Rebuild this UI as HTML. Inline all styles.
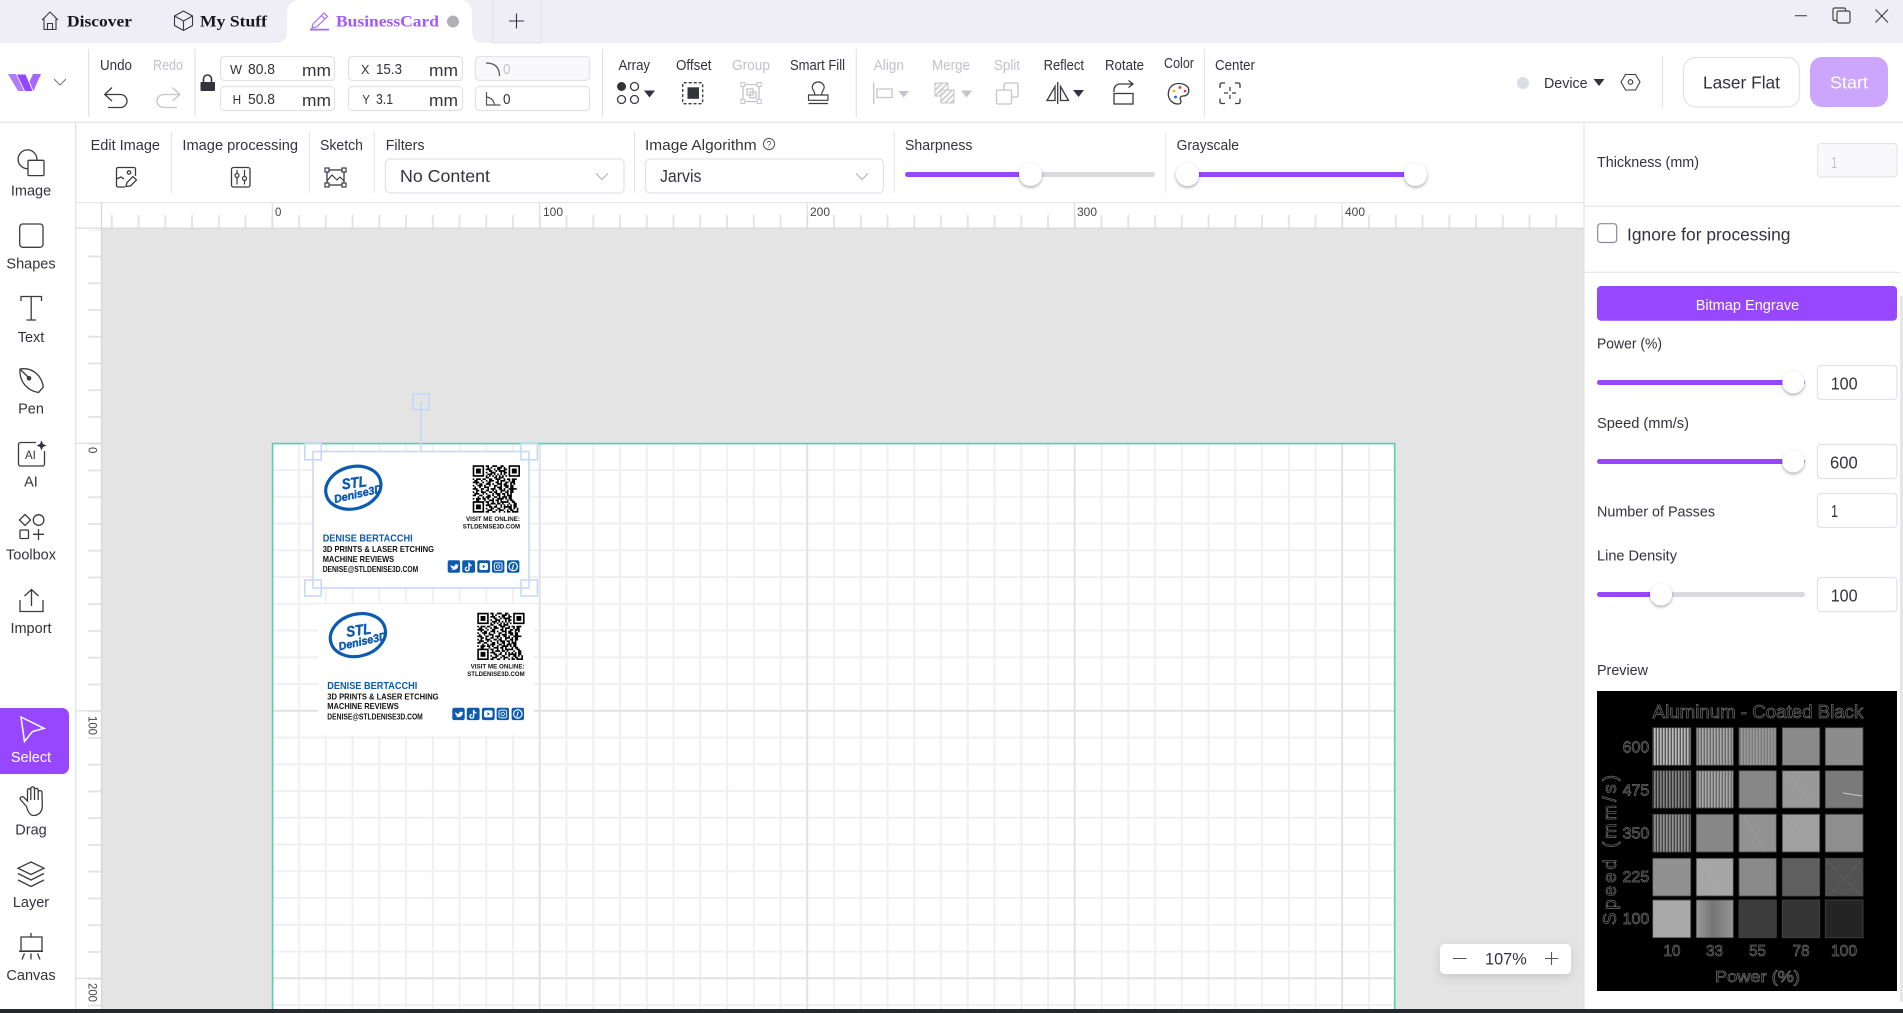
<!DOCTYPE html>
<html lang="en"><head><meta charset="utf-8"><title>BusinessCard</title>
<style>
html,body{margin:0;padding:0;width:1903px;height:1013px;overflow:hidden;background:#fff}
svg{display:block}
text{font-family:"Liberation Sans",Arial,sans-serif;font-size:15px;fill:#33333b}
.g{fill:#c2c2c8}
.s{font-family:"Liberation Serif",serif;font-weight:700;font-size:16px;fill:#17171c}
.ic{fill:none;stroke:#3a3a42;stroke-width:1.3}
.dis{fill:none;stroke:#c4c4ca;stroke-width:1.3}
.box{fill:#fff;stroke:#e2e2ea;stroke-width:1.2}
.side{text-anchor:middle;font-size:14.5px}
.r{font-size:11.5px;fill:#444}
.cb{font-weight:700;fill:#111;font-size:8.4px}
.bl{font-weight:700;fill:#0d5bb0;font-size:10px}
.pv{fill:none;stroke:#6e6e6e;stroke-width:.7;font-size:15px}
.lg{font-weight:700;font-style:italic;fill:#0d5bb0;stroke:#0d5bb0;stroke-width:.45}
</style></head><body>
<svg xmlns="http://www.w3.org/2000/svg" width="1903" height="1013" viewBox="0 0 1903 1013">
<defs>
<filter id="sh" x="-50%" y="-50%" width="200%" height="200%"><feDropShadow dx="0" dy="1.5" stdDeviation="1.6" flood-color="#000" flood-opacity=".35"/></filter>
<filter id="sh2" x="-20%" y="-50%" width="140%" height="200%"><feDropShadow dx="0" dy="3" stdDeviation="5" flood-color="#000" flood-opacity=".12"/></filter>
<pattern id="grid" patternUnits="userSpaceOnUse" x="258.925" y="429.925" width="26.75" height="26.75"><path d="M13.375 0V26.75M0 13.375H26.75" stroke="#f0f0f0" stroke-width="2" fill="none"/></pattern>
<pattern id="tx" patternUnits="userSpaceOnUse" x="271.3" y="215" width="26.75" height="13"><path d="M1 0V13" stroke="#e2e2e2" stroke-width="1.8"/></pattern>
<pattern id="ty" patternUnits="userSpaceOnUse" x="88" y="228.7" width="13" height="26.75"><path d="M0 1H13" stroke="#e2e2e2" stroke-width="1.8"/></pattern>
<pattern id="st1" patternUnits="userSpaceOnUse" width="3" height="4"><rect width="3" height="4" fill="#565656"/><rect width="1.6" height="4" fill="#bcbcbc"/></pattern>
<pattern id="st2" patternUnits="userSpaceOnUse" width="3" height="4"><rect width="3" height="4" fill="#6a6a6a"/><rect width="1.6" height="4" fill="#a6a6a6"/></pattern>
<pattern id="st3" patternUnits="userSpaceOnUse" width="3" height="4"><rect width="3" height="4" fill="#7b7b7b"/><rect width="1.6" height="4" fill="#999"/></pattern>
<pattern id="st4" patternUnits="userSpaceOnUse" width="3" height="4"><rect width="3" height="4" fill="#333"/><rect width="1.6" height="4" fill="#858585"/></pattern>
<pattern id="st5" patternUnits="userSpaceOnUse" width="3" height="4"><rect width="3" height="4" fill="#444"/><rect width="1.6" height="4" fill="#939393"/></pattern>
<pattern id="hat" patternUnits="userSpaceOnUse" width="4" height="4" patternTransform="rotate(45)"><rect width="4" height="4" fill="#fff"/><path d="M1 0V4" stroke="#c8c8ce" stroke-width="1.6"/></pattern>
<linearGradient id="m33" x1="0" x2="1" y1="0" y2="0"><stop offset="0" stop-color="#9a9a9a"/><stop offset=".45" stop-color="#757575"/><stop offset="1" stop-color="#949494"/></linearGradient>
<g id="qr">
<path fill-rule="evenodd" d="M0 0h7v7h-7zM1 1v5h5v-5zM2 2h3v3h-3zM22 0h7v7h-7zM23 1v5h5v-5zM24 2h3v3h-3zM0 22h7v7h-7zM1 23v5h5v-5zM2 24h3v3h-3z"/>
<path fill="none" stroke="#000" stroke-width="1.02" d="M8 .5h2m2 0h3m2 0h2M9 1.5h1m1 0h1m3 0h3m1 0h1M8 2.5h3m2 0h1m1 0h2m2 0h2M10 3.5h2m2 0h1m1 0h4M8 4.5h1m2 0h3m3 0h1m1 0h2M9 5.5h3m1 0h1m1 0h1m1 0h1m1 0h1M8 6.5h1m1 0h1m1 0h1m1 0h1m1 0h1m1 0h1m1 0h1M8 7.5h2m3 0h2m1 0h3M0 8.5h1m1 0h3m1 0h2m2 0h2m2 0h3m2 0h1m1 0h2m1 0h3M1 9.5h2m2 0h1m2 0h1m1 0h3m2 0h1m1 0h3m2 0h1m1 0h2M0 10.5h4m2 0h1m2 0h2m3 0h2m1 0h1m2 0h2m1 0h3M2 11.5h1m1 0h2m2 0h3m1 0h1m2 0h3m1 0h2m2 0h1m1 0h1M0 12.5h1m2 0h3m1 0h1m2 0h1m2 0h2m2 0h1m1 0h3m1 0h2M1 13.5h1m2 0h1m2 0h3m3 0h1m1 0h3m2 0h2m1 0h2M0 14.5h3m2 0h2m2 0h1m1 0h3m2 0h2m1 0h1m2 0h3m0 0h2M2 15.5h2m1 0h1m2 0h2m2 0h1m1 0h1m2 0h3m1 0h1m1 0h2M0 16.5h1m1 0h1m2 0h3m2 0h2m1 0h2m2 0h1m2 0h2m1 0h2M1 17.5h3m2 0h1m1 0h1m3 0h1m1 0h3m1 0h2m1 0h1m1 0h1M0 18.5h2m2 0h2m3 0h2m1 0h1m2 0h2m2 0h1m1 0h3M3 19.5h1m2 0h1m1 0h3m2 0h2m1 0h1m1 0h3m1 0h2M0 20.5h1m1 0h3m1 0h2m1 0h1m2 0h1m2 0h4m1 0h1m1 0h2M2 21.5h2m3 0h1m2 0h3m1 0h2m1 0h1m3 0h1m1 0h2M8 22.5h2m2 0h1m2 0h1m1 0h5m2 0h2M9 23.5h1m1 0h3m1 0h2m1 0h1m3 0h1m2 0h2M8 24.5h3m3 0h1m2 0h1m1 0h1m1 0h1m1 0h1m1 0h2M10 25.5h2m1 0h2m2 0h1m1 0h5m1 0h2M8 26.5h1m2 0h2m2 0h2m2 0h1m2 0h2m1 0h1m1 0h1M9 27.5h3m2 0h1m1 0h3m2 0h1m1 0h2m2 0h1M8 28.5h2m2 0h2m2 0h1m2 0h1m1 0h2m1 0h4"/>
</g>
<g id="soc">
<rect x="447.7" y="560.3" width="12.4" height="12.4" rx="2" fill="#0d5bb0"/><path d="M450 564.5c1 1 3 2 4.5 2-.3-2 2-3 3-1.6l1.2-.4-.7 1.2c.2 3-3 5-7.5 3.7 1 0 2-.3 2.5-.8-2-.6-2.5-2.5-2.5-4z" fill="#fff"/>
<rect x="462.2" y="560.3" width="12.8" height="12.4" rx="2" fill="#0d5bb0"/><path d="M469 562.5v6.5a1.8 1.8 0 1 1-1.8-1.8M469 563c.3 1.6 1.3 2.4 2.8 2.6" fill="none" stroke="#fff" stroke-width="1.4"/>
<rect x="477.3" y="560.3" width="12.8" height="12.4" rx="2" fill="#0d5bb0"/><rect x="479.5" y="563" width="8.4" height="7" rx="1.6" fill="#fff"/><path d="M482.8 564.8l2.6 1.7-2.6 1.7z" fill="#0d5bb0"/>
<rect x="492" y="560.3" width="12.4" height="12.4" rx="2" fill="#0d5bb0"/><rect x="494.4" y="562.8" width="7.6" height="7.6" rx="1.6" fill="none" stroke="#cfe0f5" stroke-width="1.1"/><circle cx="498.2" cy="566.6" r="1.7" fill="none" stroke="#cfe0f5" stroke-width="1"/>
<rect x="507" y="560.3" width="12.4" height="12.4" rx="2" fill="#0d5bb0"/><circle cx="513.2" cy="566.5" r="4.2" fill="none" stroke="#fff" stroke-width="1.2"/><path d="M513.6 564.3l-1.3 5" stroke="#fff" stroke-width="1.1"/>
</g>
<g id="ring">
<ellipse cx="353.3" cy="487.7" rx="28" ry="21" transform="rotate(-15 353.3 487.7)" fill="none" stroke="#0d5bb0" stroke-width="3.2"/>
<path d="M326 476C332 468 342 463.5 352 463" fill="none" stroke="#fff" stroke-width="1.2"/>
</g>
</defs>

<!-- base -->
<rect width="1903" height="1013" fill="#fff"/>

<!-- tab bar -->
<rect width="1903" height="43" fill="#eeeef4"/>
<path d="M275 43Q287 43 287 31V14Q287 0 301 0H458Q472 0 472 14V31Q472 43 484 43Z" fill="#fff"/>
<path class="ic" style="stroke-width:1.1" d="M42 20L50 12L58 20M44 18V29.5H56V18M47.5 29.5V23.5H52.5V29.5"/>
<text class="s" x="67" y="26.5" textLength="65" lengthAdjust="spacingAndGlyphs">Discover</text>
<path class="ic" style="stroke-width:1.1" d="M183.5 11L192.5 16V25.5L183.5 30.5L174.5 25.5V16ZM174.5 16L183.5 21L192.5 16M183.5 21V30.5"/>
<text class="s" x="200" y="26.5" textLength="67" lengthAdjust="spacingAndGlyphs">My Stuff</text>
<path d="M313 24L324 13L327.5 16.5L316.5 27L312 28ZM321.5 15.5L325 19" fill="none" stroke="#a66bff" stroke-width="1.2"/><path d="M310 29.6H329" stroke="#a66bff" stroke-width="1.8"/>
<text class="s" x="336" y="26.5" textLength="103" lengthAdjust="spacingAndGlyphs" style="fill:#a259ff">BusinessCard</text>
<circle cx="453" cy="21.5" r="6" fill="#b0b0b4"/>
<rect x="492.5" y="-1" width="49" height="44" fill="none" stroke="#e2e2e9"/>
<path d="M509 21H524M516.5 13.5V28.5" stroke="#33333b" stroke-width="1.1"/>
<path d="M1795 15.7H1807" stroke="#555" stroke-width="1.2"/>
<path d="M1837 20.5h-2.5a1.5 1.5 0 0 1-1.5-1.5V9.5A1.5 1.5 0 0 1 1834.5 8H1844a1.5 1.5 0 0 1 1.5 1.5V11" fill="none" stroke="#444" stroke-width="1.2"/>
<rect x="1837" y="11" width="13" height="12" rx="1.6" fill="none" stroke="#444" stroke-width="1.2"/>
<path d="M1875.5 9.5L1888 22.5M1888 9.5L1875.5 22.5" stroke="#444" stroke-width="1.2"/>

<!-- toolbar -->
<path d="M0 122.3H1903" stroke="#e4e4e9" stroke-width="1.3"/>
<path d="M8 74H16L24 91H18Z" fill="#b07dff"/><path d="M17 74.5H25.5L32.5 91H25Z" fill="#9347ff"/><path d="M33 74H41L33.5 91L29.5 81.5Z" fill="#a667ff"/>
<path d="M54 79L60 85L66 79" fill="none" stroke="#77777f" stroke-width="1.1"/>
<path d="M88.7 49V117M195 49V117M602.5 49V117M856.3 49V117M1204.4 49V117M1662.4 57V107" stroke="#e0e0e6" stroke-width="1.1"/>
<text x="100" y="70" textLength="32" lengthAdjust="spacingAndGlyphs">Undo</text>
<text class="g" x="153" y="70" textLength="30" lengthAdjust="spacingAndGlyphs">Redo</text>
<path class="ic" d="M112 87.5L104.7 94.5L112 101M105 94.5H120.5a6.5 6.5 0 0 1 0 13H108"/>
<path class="dis" d="M172.5 87.5L179.8 94.5L172.5 101M179.5 94.5H164a7 6.5 0 0 0 0 13H177"/>
<path d="M203.5 82v-3a4 4 0 0 1 8 0v3" fill="none" stroke="#33333b" stroke-width="1.6"/><rect x="200.5" y="82" width="14.5" height="9" rx="1" fill="#33333b"/>
<rect class="box" x="220.5" y="56.5" width="114" height="24" rx="4"/><rect class="box" x="220.5" y="86.5" width="114" height="24" rx="4"/>
<rect class="box" x="348.5" y="56.5" width="114" height="24" rx="4"/><rect class="box" x="348.5" y="86.5" width="114" height="24" rx="4"/>
<rect class="box" x="475.5" y="56.5" width="114" height="24" rx="4" style="fill:#f9f9fb"/><rect class="box" x="475.5" y="86.5" width="114" height="24" rx="4"/>
<text x="230" y="74" style="font-size:13px" textLength="12" lengthAdjust="spacingAndGlyphs">W</text>
<text x="248" y="74" textLength="27" lengthAdjust="spacingAndGlyphs">80.8</text>
<text x="302" y="76" style="font-size:16.5px" textLength="29" lengthAdjust="spacingAndGlyphs">mm</text>
<text x="232.6" y="104" style="font-size:13px" textLength="8.5" lengthAdjust="spacingAndGlyphs">H</text>
<text x="248" y="104" textLength="27" lengthAdjust="spacingAndGlyphs">50.8</text>
<text x="302" y="106" style="font-size:16.5px" textLength="29" lengthAdjust="spacingAndGlyphs">mm</text>
<text x="361" y="74" style="font-size:13px" textLength="8.5" lengthAdjust="spacingAndGlyphs">X</text>
<text x="376" y="74" textLength="26" lengthAdjust="spacingAndGlyphs">15.3</text>
<text x="429" y="76" style="font-size:16.5px" textLength="29" lengthAdjust="spacingAndGlyphs">mm</text>
<text x="362.4" y="104" style="font-size:13px" textLength="7.5" lengthAdjust="spacingAndGlyphs">Y</text>
<text x="376" y="104" textLength="17" lengthAdjust="spacingAndGlyphs">3.1</text>
<text x="429" y="106" style="font-size:16.5px" textLength="29" lengthAdjust="spacingAndGlyphs">mm</text>
<path d="M486 63Q499.5 63 499.5 76" fill="none" stroke="#555" stroke-width="1.2"/>
<text class="g" x="503" y="74" textLength="7.5" lengthAdjust="spacingAndGlyphs">0</text>
<path d="M486.5 92V105H500.5M486.5 97Q493.5 98 494.5 105" fill="none" stroke="#555" stroke-width="1.2"/>
<text x="503" y="104" textLength="7.5" lengthAdjust="spacingAndGlyphs">0</text>

<text x="618.5" y="70" textLength="31.5" lengthAdjust="spacingAndGlyphs">Array</text>
<circle cx="621.5" cy="86.5" r="4.5" fill="#33333b"/><circle cx="634.5" cy="86.5" r="4" class="ic"/><circle cx="621.5" cy="99.5" r="4" class="ic"/><circle cx="634.5" cy="99.5" r="4" class="ic"/><path d="M644 90.5H655L649.5 97.5Z" fill="#33333b"/>
<text x="676" y="70" textLength="35.5" lengthAdjust="spacingAndGlyphs">Offset</text>
<rect x="682.7" y="82.7" width="20" height="21" rx="1" class="ic" stroke-dasharray="3 2"/><rect x="687.5" y="87.3" width="11.5" height="11.5" fill="#33333b"/>
<text class="g" x="732" y="70" textLength="38" lengthAdjust="spacingAndGlyphs">Group</text>
<path class="dis" d="M743 84.5H759V101.5H743ZM747 89H753V95H747ZM750 92H756V98H750Z"/><path fill="#fff" stroke="#c4c4ca" d="M740.8 82.5h4v4h-4zM757.2 82.5h4v4h-4zM740.8 99.5h4v4h-4zM757.2 99.5h4v4h-4z"/>
<text x="790" y="70" textLength="55" lengthAdjust="spacingAndGlyphs">Smart Fill</text>
<path class="ic" style="stroke-width:1.15" d="M814.7 94.5c.6-2.8-2.5-4.2-2.5-7.3a6 5.2 0 0 1 12 0c0 3.1-3.1 4.5-2.5 7.3M808.5 95H828V100.3H808.5ZM808.5 103.5H828"/>
<text class="g" x="873.6" y="70" textLength="30.4" lengthAdjust="spacingAndGlyphs">Align</text>
<path class="dis" d="M873.7 82.5V104M877 89H892V97.5H877Z"/><path d="M898.5 91H909L903.7 97.5Z" fill="#c4c4ca"/>
<text class="g" x="932" y="70" textLength="38" lengthAdjust="spacingAndGlyphs">Merge</text>
<rect x="935" y="83" width="13" height="13" fill="url(#hat)" stroke="#c4c4ca"/><rect x="941" y="90" width="13" height="13" fill="url(#hat)" stroke="#c4c4ca"/><path d="M961 90.5H972L966.5 97.5Z" fill="#c4c4ca"/>
<text class="g" x="994" y="70" textLength="26" lengthAdjust="spacingAndGlyphs">Split</text>
<path class="dis" d="M1004 90V84.5a1.5 1.5 0 0 1 1.5-1.5H1016.5a1.5 1.5 0 0 1 1.5 1.5V95.5a1.5 1.5 0 0 1-1.5 1.5H1012"/><rect x="996.5" y="90" width="15" height="14" rx="1.5" class="dis"/>
<text x="1043.6" y="70" textLength="40.4" lengthAdjust="spacingAndGlyphs">Reflect</text>
<path class="ic" d="M1055 86.5V100.5H1047ZM1060.5 86.5V100.5H1068.5Z"/><path d="M1057.7 82V104" stroke="#3a3a42" stroke-width="1.3"/><path d="M1073 90H1084L1078.5 97Z" fill="#33333b"/>
<text x="1105" y="70" textLength="39" lengthAdjust="spacingAndGlyphs">Rotate</text>
<rect x="1114" y="93.5" width="19" height="10.5" class="ic"/><path class="ic" d="M1114 92V90a6 6 0 0 1 6-6H1133M1128.5 80.5L1133 84L1128.5 87.5"/>
<text x="1164" y="68" textLength="30" lengthAdjust="spacingAndGlyphs">Color</text>
<path class="ic" d="M1178.5 83.5C1172 83.5 1168.3 88.5 1168.3 94C1168.3 100 1173 104 1178 104C1181 104 1181.5 102 1180.5 100C1179.5 97.5 1181 96 1183 96C1187 96 1188.8 93.5 1188.8 90.5C1188.8 86 1184 83.5 1178.5 83.5Z"/><circle cx="1174" cy="91" r="1.4" fill="#f5b400"/><circle cx="1180" cy="87.5" r="1.4" fill="#e33"/><circle cx="1185" cy="91" r="1.3" fill="#e33"/><circle cx="1175.5" cy="97" r="1.4" fill="#35f"/>
<text x="1215" y="70" textLength="40" lengthAdjust="spacingAndGlyphs">Center</text>
<path class="ic" d="M1220 88V84.5a1.5 1.5 0 0 1 1.5-1.5H1225M1235 83H1238.5a1.5 1.5 0 0 1 1.5 1.5V88M1240 98.5V102a1.5 1.5 0 0 1-1.5 1.5H1235M1225 103.5H1221.5a1.5 1.5 0 0 1-1.5-1.5V98.5"/><path class="ic" style="stroke-width:1.2" d="M1230 87V91M1230 95V99M1224 93H1228M1232 93H1236"/>
<circle cx="1523" cy="83" r="6" fill="#dddde6"/>
<text x="1544" y="88" textLength="43.6" lengthAdjust="spacingAndGlyphs">Device</text>
<path d="M1593.5 79H1604.5L1599 86Z" fill="#33333b"/>
<path class="ic" style="stroke-width:1.1" d="M1625.5 74.5H1635.5L1640 82L1635.5 90H1625.5L1621 82Z"/><circle cx="1630.5" cy="82" r="2.3" class="ic" style="stroke-width:1.1"/>
<rect x="1683.5" y="57.5" width="116" height="49.5" rx="12" fill="#fff" stroke="#e3e3e9" stroke-width="1.2"/>
<text x="1703" y="88.5" style="font-size:17.5px" textLength="77" lengthAdjust="spacingAndGlyphs">Laser Flat</text>
<rect x="1810" y="57" width="78" height="50" rx="12" fill="#cca5fd"/>
<text x="1830" y="88.5" style="font-size:17.5px;fill:#fff" textLength="38" lengthAdjust="spacingAndGlyphs">Start</text>

<!-- options bar -->
<path d="M76 202.7H1584" stroke="#e4e4e9" stroke-width="1.2"/>
<path d="M171.4 132V193M309.3 132V193M374.3 132V193M634.5 132V193M894.3 132V193M1165.7 132V193" stroke="#e4e4ea" stroke-width="1.1"/>
<text x="90.6" y="150" textLength="69.4" lengthAdjust="spacingAndGlyphs">Edit Image</text>
<path class="ic" d="M125 187H118a1.5 1.5 0 0 1-1.5-1.5V169a1.5 1.5 0 0 1 1.5-1.5H134a1.5 1.5 0 0 1 1.5 1.5V176M116.5 179L121 177L124 179"/><circle cx="129" cy="172.5" r="1.7" class="ic"/><path class="ic" d="M126 186.5L127 182.5L133 176.5L136.5 180L130.5 186Z"/>
<text x="182.4" y="150" textLength="115.6" lengthAdjust="spacingAndGlyphs">Image processing</text>
<rect x="231.5" y="167.5" width="18.5" height="19.5" rx="2" class="ic"/><path class="ic" style="stroke-width:1.2" d="M237 170V173.5M237 177.5V184.5M244.5 170V176.5M244.5 180.5V184.5"/><circle cx="237" cy="175.5" r="2" class="ic" style="stroke-width:1.2"/><circle cx="244.5" cy="178.5" r="2" class="ic" style="stroke-width:1.2"/>
<text x="320" y="150" textLength="43" lengthAdjust="spacingAndGlyphs">Sketch</text>
<rect x="327" y="170" width="17" height="15" class="ic"/><path class="ic" style="stroke-width:1.1" d="M327 181L332 175L337 180L340 177L344 181"/><g fill="#fff" stroke="#3a3a42" stroke-width="1.2"><rect x="325" y="168" width="4" height="4"/><rect x="342" y="168" width="4" height="4"/><rect x="325" y="183" width="4" height="4"/><rect x="342" y="183" width="4" height="4"/></g>
<text x="385.7" y="150" textLength="38.8" lengthAdjust="spacingAndGlyphs">Filters</text>
<rect class="box" x="385.5" y="159" width="238.5" height="34" rx="4.5"/>
<text x="400" y="182" style="font-size:17.5px" textLength="90" lengthAdjust="spacingAndGlyphs">No Content</text>
<path d="M596 173.5L602 179.5L608 173.5" fill="none" stroke="#b0b0b8" stroke-width="1.1"/>
<text x="645" y="150" textLength="111.6" lengthAdjust="spacingAndGlyphs">Image Algorithm</text>
<circle cx="769" cy="144" r="5.6" fill="none" stroke="#555" stroke-width="1"/><text x="766.5" y="147.5" style="font-size:9px;fill:#555">?</text>
<rect class="box" x="645.5" y="159" width="238" height="34" rx="4.5"/>
<text x="660" y="182" style="font-size:17.5px" textLength="41.4" lengthAdjust="spacingAndGlyphs">Jarvis</text>
<path d="M856 173.5L862 179.5L868 173.5" fill="none" stroke="#b0b0b8" stroke-width="1.1"/>
<text x="905" y="150" textLength="67.5" lengthAdjust="spacingAndGlyphs">Sharpness</text>
<rect x="905" y="172" width="250" height="5" rx="2.5" fill="#d9d9de"/><rect x="905" y="172" width="125" height="5" rx="2.5" fill="#9747ff"/>
<circle cx="1030.5" cy="174.5" r="11.5" fill="#fff" filter="url(#sh)"/>
<text x="1176.6" y="150" textLength="62.4" lengthAdjust="spacingAndGlyphs">Grayscale</text>
<rect x="1176" y="172" width="240" height="5" rx="2.5" fill="#9747ff"/>
<circle cx="1187.5" cy="174.5" r="11.5" fill="#fff" filter="url(#sh)"/><circle cx="1415.5" cy="174.5" r="11.5" fill="#fff" filter="url(#sh)"/>

<!-- rulers -->
<rect x="101" y="228" width="1483" height="781" fill="#e4e4e4"/>
<rect x="102" y="215" width="1480" height="13" fill="url(#tx)"/>
<rect x="88" y="230" width="13" height="779" fill="url(#ty)"/>
<path d="M76 228.2H1584" stroke="#d6d6d6" stroke-width="1.2"/>
<path d="M101.5 203V1009" stroke="#d6d6d6" stroke-width="1.2"/>
<path d="M75.7 123V1009" stroke="#e0e0e4" stroke-width="1.2"/>
<path d="M272.3 203V228M539.7 203V228M807.2 203V228M1074.6 203V228M1342 203V228M76 443.3H101M76 710.8H101M76 978.3H101" stroke="#dcdcdc" stroke-width="1.1"/>
<text class="r" x="275" y="216">0</text><text class="r" x="543" y="216" textLength="20" lengthAdjust="spacingAndGlyphs">100</text><text class="r" x="810" y="216" textLength="20" lengthAdjust="spacingAndGlyphs">200</text><text class="r" x="1077" y="216" textLength="20" lengthAdjust="spacingAndGlyphs">300</text><text class="r" x="1345" y="216" textLength="20" lengthAdjust="spacingAndGlyphs">400</text>
<text class="r" transform="translate(88.5,447) rotate(90)">0</text><text class="r" transform="translate(88.5,716) rotate(90)" textLength="19" lengthAdjust="spacingAndGlyphs">100</text><text class="r" transform="translate(88.5,983) rotate(90)" textLength="19" lengthAdjust="spacingAndGlyphs">200</text>

<!-- worktable -->
<rect x="272.3" y="443.3" width="1122.7" height="566" fill="#fff"/>
<rect x="272.3" y="443.3" width="1122.7" height="566" fill="url(#grid)"/>
<path d="M539.7 443V1009M807.2 443V1009M1074.6 443V1009M1342 443V1009M272 710.8H1395M272 978.3H1395" stroke="#e2e2e2" stroke-width="1.8"/>
<path d="M272.6 1009V443.6H1394.7V1009" fill="none" stroke="#50d1b4" stroke-width="1.6"/>

<!-- cards -->
<rect x="313" y="451" width="216" height="137" fill="#fff"/>
<rect x="318" y="604" width="216" height="131" fill="#fff"/>

<g>
<use href="#ring"/>
<text class="lg" x="341.5" y="488" transform="rotate(-8 353 482)" style="font-size:15px" textLength="25" lengthAdjust="spacingAndGlyphs">STL</text>
<text class="lg" x="333" y="498" transform="rotate(-13 356 492)" style="font-size:11px" textLength="49" lengthAdjust="spacingAndGlyphs">Denise3D</text>
<use href="#qr" transform="translate(472.7,465.3) scale(1.631)"/>
<text class="cb" x="466" y="521" style="font-size:6.8px" textLength="54" lengthAdjust="spacingAndGlyphs">VISIT ME ONLINE:</text>
<text class="cb" x="462.7" y="528.7" style="font-size:6.8px" textLength="57.3" lengthAdjust="spacingAndGlyphs">STLDENISE3D.COM</text>
<text class="bl" x="322.7" y="541.7" textLength="90" lengthAdjust="spacingAndGlyphs">DENISE BERTACCHI</text>
<text class="cb" x="322.7" y="552" textLength="111.3" lengthAdjust="spacingAndGlyphs">3D PRINTS &amp; LASER ETCHING</text>
<text class="cb" x="322.7" y="561.8" textLength="71.5" lengthAdjust="spacingAndGlyphs">MACHINE REVIEWS</text>
<text class="cb" x="322.7" y="571.9" style="font-size:7.8px" textLength="95.5" lengthAdjust="spacingAndGlyphs">DENISE@STLDENISE3D.COM</text>
<use href="#soc"/>
</g>
<g transform="translate(4.6,147.4)">
<use href="#ring"/>
<text class="lg" x="341.5" y="488" transform="rotate(-8 353 482)" style="font-size:15px" textLength="25" lengthAdjust="spacingAndGlyphs">STL</text>
<text class="lg" x="333" y="498" transform="rotate(-13 356 492)" style="font-size:11px" textLength="49" lengthAdjust="spacingAndGlyphs">Denise3D</text>
<use href="#qr" transform="translate(472.7,465.3) scale(1.631)"/>
<text class="cb" x="466" y="521" style="font-size:6.8px" textLength="54" lengthAdjust="spacingAndGlyphs">VISIT ME ONLINE:</text>
<text class="cb" x="462.7" y="528.7" style="font-size:6.8px" textLength="57.3" lengthAdjust="spacingAndGlyphs">STLDENISE3D.COM</text>
<text class="bl" x="322.7" y="541.7" textLength="90" lengthAdjust="spacingAndGlyphs">DENISE BERTACCHI</text>
<text class="cb" x="322.7" y="552" textLength="111.3" lengthAdjust="spacingAndGlyphs">3D PRINTS &amp; LASER ETCHING</text>
<text class="cb" x="322.7" y="561.8" textLength="71.5" lengthAdjust="spacingAndGlyphs">MACHINE REVIEWS</text>
<text class="cb" x="322.7" y="571.9" style="font-size:7.8px" textLength="95.5" lengthAdjust="spacingAndGlyphs">DENISE@STLDENISE3D.COM</text>
<use href="#soc"/>
</g>

<!-- selection -->
<g fill="none" stroke="#c6d9fa" stroke-width="1.6">
<rect x="313" y="451.5" width="216" height="136.5"/>
<path d="M421 402V451"/>
<rect x="413" y="393.7" width="16" height="16"/>
<rect x="304.8" y="443.8" width="16.4" height="16"/><rect x="521" y="443.8" width="16.4" height="16"/>
<rect x="304.8" y="580" width="16.4" height="16"/><rect x="521" y="580" width="16.4" height="16"/>
</g>

<!-- zoom control -->
<rect x="1440" y="944" width="131" height="30" rx="5" fill="#fff" filter="url(#sh2)"/>
<path d="M1453 958.5H1466.5M1545 958.5H1558M1551.5 952V965" stroke="#555" stroke-width="1.1"/>
<text x="1485" y="964.5" style="font-size:16.5px" textLength="41.7" lengthAdjust="spacingAndGlyphs">107%</text>

<!-- right panel -->
<rect x="1584" y="123" width="319" height="886" fill="#fff"/>
<path d="M1584 123V1009" stroke="#e2e2e6" stroke-width="1.1"/>
<text x="1597" y="167" style="font-size:14.8px" textLength="102" lengthAdjust="spacingAndGlyphs">Thickness (mm)</text>
<rect x="1817.6" y="143.5" width="79.4" height="33.5" rx="3.5" fill="#f9f9fb" stroke="#e2e2ea"/>
<text class="g" x="1831" y="168" style="font-size:16px" textLength="6.5" lengthAdjust="spacingAndGlyphs">1</text>
<path d="M1584 206.3H1900M1584 272.3H1900" stroke="#e4e4ea" stroke-width="1.2"/>
<rect x="1597.7" y="223.7" width="19" height="18.8" rx="3" fill="#fff" stroke="#8b8b93" stroke-width="1.2"/>
<text x="1627" y="240.5" style="font-size:17.5px" textLength="163.5" lengthAdjust="spacingAndGlyphs">Ignore for processing</text>
<rect x="1597" y="286" width="300" height="34.7" rx="4" fill="#9747ff"/>
<text x="1695.7" y="310" style="font-size:14.5px;fill:#fff" textLength="103.5" lengthAdjust="spacingAndGlyphs">Bitmap Engrave</text>
<text x="1597" y="348.5" style="font-size:14.8px" textLength="65" lengthAdjust="spacingAndGlyphs">Power (%)</text>
<rect x="1597" y="380" width="208" height="5" rx="2.5" fill="#9747ff"/><circle cx="1793.3" cy="382.4" r="11" fill="#fff" filter="url(#sh)"/>
<rect class="box" x="1817.5" y="365.5" width="79.5" height="34" rx="3.5"/>
<text x="1830.7" y="389.7" style="font-size:17.5px" textLength="27" lengthAdjust="spacingAndGlyphs">100</text>
<text x="1597" y="428" style="font-size:14.8px" textLength="92" lengthAdjust="spacingAndGlyphs">Speed (mm/s)</text>
<rect x="1597" y="459" width="208" height="5" rx="2.5" fill="#9747ff"/><circle cx="1793.3" cy="461.4" r="11" fill="#fff" filter="url(#sh)"/>
<rect class="box" x="1817.5" y="444.5" width="79.5" height="34" rx="3.5"/>
<text x="1830" y="468.7" style="font-size:17.5px" textLength="27.7" lengthAdjust="spacingAndGlyphs">600</text>
<text x="1597" y="516.7" style="font-size:14.8px" textLength="118" lengthAdjust="spacingAndGlyphs">Number of Passes</text>
<rect class="box" x="1817.5" y="493.5" width="79.5" height="34" rx="3.5"/>
<text x="1831" y="517" style="font-size:17.5px" textLength="7" lengthAdjust="spacingAndGlyphs">1</text>
<text x="1597" y="560.7" style="font-size:14.8px" textLength="80" lengthAdjust="spacingAndGlyphs">Line Density</text>
<rect x="1597" y="592" width="208" height="5" rx="2.5" fill="#d9d9de"/><rect x="1597" y="592" width="64" height="5" rx="2.5" fill="#9747ff"/><circle cx="1661" cy="594.4" r="11" fill="#fff" filter="url(#sh)"/>
<rect class="box" x="1817.5" y="577.5" width="79.5" height="34" rx="3.5"/>
<text x="1830.7" y="601.7" style="font-size:17.5px" textLength="27" lengthAdjust="spacingAndGlyphs">100</text>
<text x="1597" y="675" style="font-size:14.8px" textLength="51" lengthAdjust="spacingAndGlyphs">Preview</text>
<rect x="1900" y="296" width="3" height="706" rx="1.5" fill="#e6e6e6"/>

<!-- preview image -->
<g transform="translate(1597,691)">
<rect width="300" height="300" fill="#000"/>
<text class="pv" x="55.7" y="27" style="font-size:18px" textLength="210.6" lengthAdjust="spacingAndGlyphs">Aluminum - Coated Black</text>
<g stroke="#454545" stroke-width=".8">
<rect x="55.7" y="36.7" width="38" height="37.6" fill="url(#st1)"/><rect x="99.3" y="36.7" width="37" height="37.6" fill="url(#st2)"/><rect x="142" y="36.7" width="37.3" height="37.6" fill="url(#st3)"/><rect x="185.3" y="36.7" width="37.4" height="37.6" fill="#8a8a8a"/><rect x="228.3" y="36.7" width="37.7" height="37.6" fill="#8c8c8c"/>
<rect x="55.7" y="79.7" width="38" height="37.3" fill="url(#st4)"/><rect x="99.3" y="79.7" width="37" height="37.3" fill="url(#st2)"/><rect x="142" y="79.7" width="37.3" height="37.3" fill="#878787"/><rect x="185.3" y="79.7" width="37.4" height="37.3" fill="#999"/><rect x="228.3" y="79.7" width="37.7" height="37.3" fill="#7a7a7a"/>
<rect x="55.7" y="123.3" width="38" height="37.7" fill="url(#st5)"/><rect x="99.3" y="123.3" width="37" height="37.7" fill="#878787"/><rect x="142" y="123.3" width="37.3" height="37.7" fill="#929292"/><rect x="185.3" y="123.3" width="37.4" height="37.7" fill="#a0a0a0"/><rect x="228.3" y="123.3" width="37.7" height="37.7" fill="#8e8e8e"/>
<rect x="55.7" y="167.3" width="38" height="37.7" fill="#919191"/><rect x="99.3" y="167.3" width="37" height="37.7" fill="#a6a6a6"/><rect x="142" y="167.3" width="37.3" height="37.7" fill="#8a8a8a"/><rect x="185.3" y="167.3" width="37.4" height="37.7" fill="#5f5f5f"/><rect x="228.3" y="167.3" width="37.7" height="37.7" fill="#525252"/>
<rect x="55.7" y="209" width="38" height="37.7" fill="#a9a9a9"/><rect x="99.3" y="209" width="37" height="37.7" fill="url(#m33)"/><rect x="142" y="209" width="37.3" height="37.7" fill="#3b3b3b"/><rect x="185.3" y="209" width="37.4" height="37.7" fill="#343434"/><rect x="228.3" y="209" width="37.7" height="37.7" fill="#242424"/>
</g>
<g stroke="#bbb" stroke-width=".6" fill="none" opacity=".35">
<path d="M147 125L168 160M190 125L222 158M190 82L218 116M103 168L122 204"/><path d="M230 170L264 204M264 170L232 204" stroke="#888"/>
</g>
<path d="M246 102L265 105" stroke="#ddd" stroke-width="1" opacity=".8"/>
<g>
<text class="pv" x="25.7" y="61.5" style="font-size:15.5px" textLength="26.6" lengthAdjust="spacingAndGlyphs">600</text>
<text class="pv" x="25.7" y="104.5" style="font-size:15.5px" textLength="26.6" lengthAdjust="spacingAndGlyphs">475</text>
<text class="pv" x="25.7" y="147.5" style="font-size:15.5px" textLength="26.6" lengthAdjust="spacingAndGlyphs">350</text>
<text class="pv" x="25.7" y="191" style="font-size:15.5px" textLength="26.6" lengthAdjust="spacingAndGlyphs">225</text>
<text class="pv" x="25.7" y="233" style="font-size:15.5px" textLength="26.6" lengthAdjust="spacingAndGlyphs">100</text>
<text class="pv" transform="translate(19,234) rotate(-90)" style="font-size:18.5px" textLength="150" lengthAdjust="spacing">Speed (mm/s)</text>
<text class="pv" x="66.5" y="265" style="font-size:15.5px" textLength="17" lengthAdjust="spacingAndGlyphs">10</text>
<text class="pv" x="109" y="265" style="font-size:15.5px" textLength="17" lengthAdjust="spacingAndGlyphs">33</text>
<text class="pv" x="152" y="265" style="font-size:15.5px" textLength="17" lengthAdjust="spacingAndGlyphs">55</text>
<text class="pv" x="195.5" y="265" style="font-size:15.5px" textLength="17" lengthAdjust="spacingAndGlyphs">78</text>
<text class="pv" x="234" y="265" style="font-size:15.5px" textLength="26" lengthAdjust="spacingAndGlyphs">100</text>
<text class="pv" x="118" y="291" style="font-size:16px" textLength="85" lengthAdjust="spacingAndGlyphs">Power (%)</text>
</g>
</g>

<!-- left sidebar -->
<g>
<circle cx="27.5" cy="159.3" r="9.4" class="ic"/><rect x="28" y="160.3" width="16" height="15.3" rx="1" fill="#fff" stroke="#3a3a42" stroke-width="1.3"/>
<text class="side" x="31" y="195.6">Image</text>
<rect x="19.7" y="224" width="23.3" height="23.3" rx="3" class="ic"/>
<text class="side" x="31" y="268.3">Shapes</text>
<path class="ic" d="M21 301V296.5H41.5V301M31.2 296.5V320M26.5 320H36"/>
<text class="side" x="31" y="341.8">Text</text>
<path class="ic" d="M20 369C32 367 41.5 375 43.3 387L38.5 392.5C28 391 19 382 20 369ZM20 369L29 378"/><circle cx="29" cy="378.3" r="2.3" fill="#3a3a42"/>
<text class="side" x="31" y="413.7">Pen</text>
<path class="ic" d="M36 442.5H20.5a2 2 0 0 0-2 2V464a2 2 0 0 0 2 2H42.5a2 2 0 0 0 2-2V451"/><text x="25" y="459" style="font-size:11.5px">AI</text><path d="M41.5 440.5L43 444L46.5 445.5L43 447L41.5 450.5L40 447L36.5 445.5L40 444Z" fill="#33333b"/>
<text class="side" x="31" y="486.7">AI</text>
<path class="ic" d="M25 514.5L30.5 520L25 525.5L19.5 520Z"/><circle cx="38.6" cy="520" r="5.3" class="ic"/><rect x="20" y="530" width="8.5" height="8.5" rx="1" class="ic"/><path class="ic" d="M33 534.3H44M38.5 529V540"/>
<text class="side" x="31" y="559.7">Toolbox</text>
<path class="ic" d="M20 600V611.5H43V600M31.5 606V589.5M24.5 596L31.5 589.5L38.5 596"/>
<text class="side" x="31" y="633.2">Import</text>
<path d="M0 708H62a7 7 0 0 1 7 7V767a7 7 0 0 1-7 7H0Z" fill="#9747ff"/>
<path d="M21 717L44 728.3L32.3 731.7L24.5 741.5Z" fill="none" stroke="#fff" stroke-width="1.5"/>
<text class="side" x="31" y="762" style="fill:#fff">Select</text>
<path class="ic" d="M26.5 806.5L20.5 799.5C19.3 797.5 22 795.5 24 797.5L27.5 801V790.5C27.5 788 30.6 788 30.8 790.5V788.8C31 786.2 34.3 786.2 34.5 788.8V790C34.8 787.8 38 787.8 38.2 790.2V792C38.6 790 41.8 790.2 42 792.5L42.3 806C42.3 812 38.5 815.5 33.5 815.5C30 815.5 28 812 26.5 806.5ZM30.8 790.5V800M34.5 789.5V800M38.2 791V800"/>
<text class="side" x="31" y="834.7">Drag</text>
<path class="ic" d="M31 862L44 868.2L31 874.5L18 868.2ZM18 873.5L31 880L44 873.5M18 880L31 886.5L44 880"/>
<text class="side" x="31" y="907">Layer</text>
<path class="ic" d="M31 933V937M21 937H42V951H21ZM19 951.3H43"/><path d="M31 953.5V959.5M24.5 953.5L22 959.5M37.5 953.5L40 959.5" class="ic"/>
<text class="side" x="31" y="980">Canvas</text>
</g>

<!-- taskbar strip -->
<rect x="0" y="1009" width="1903" height="4" fill="#25282d"/>
</svg>
</body></html>
